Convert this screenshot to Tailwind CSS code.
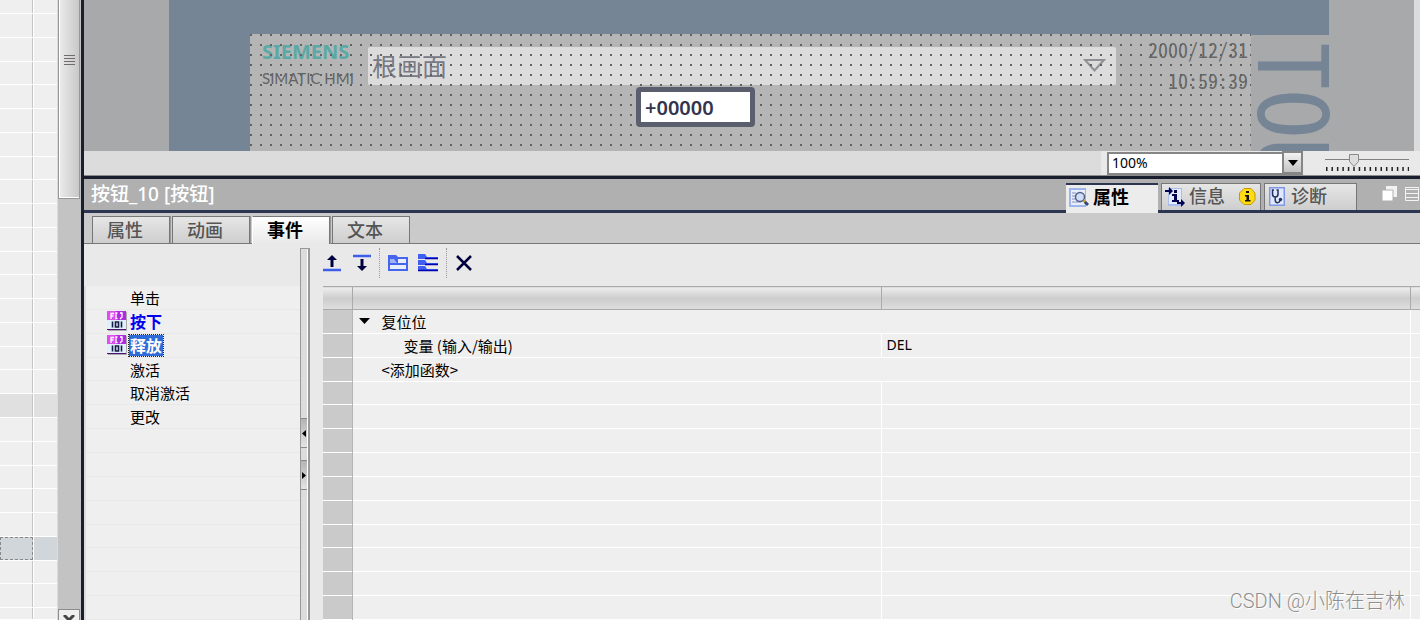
<!DOCTYPE html>
<html lang="zh-CN">
<head>
    <meta charset="UTF-8">
    <meta name="viewport" content="width=device-width, initial-scale=1.0">
    <title>按钮_10 [按钮]</title>
    <script src="https://cdn.jsdelivr.net/npm/@tailwindcss/browser@4"></script>
</head>
<body class="h-screen overflow-hidden bg-[#e9e9e9] font-['Noto_Sans','Noto_Sans_CJK_SC',sans-serif] text-[15px] text-black">
    <div class="flex h-full">

        <!-- Tail of the project tree -->
        <aside class="flex w-[81px] shrink-0 bg-[#efefef]">
            <div id="treeRows" class="flex w-[57px] flex-col"></div>
            <div class="flex w-6 flex-col border-l border-[#dcdcdc] bg-[#c3c3c3] pr-px">
                <div class="flex h-[199px] justify-center border border-t-0 border-[#969696] bg-linear-to-r from-[#ececec] to-[#c8c8c8] pt-[55px] shadow-[inset_1px_-1px_0_#fff]">
                    <svg class="h-[10px] w-[11px]" viewBox="0 0 11 10" stroke="#6f6a6c"><path d="M0 .5h11M0 3.5h11M0 6.5h11M0 9.5h11"/></svg>
                </div>
                <button aria-label="向下滚动" class="mt-auto flex h-[11px] items-end justify-center border border-b-0 border-[#8b8b8b] bg-[#efefef]">
                    <svg class="h-[5px] w-[12px]" viewBox="0 0 12 5" fill="none" stroke="#444" stroke-width="3"><path d="M1 0l5 5 5-5"/></svg>
                </button>
            </div>
        </aside>

        <main class="flex min-w-0 flex-1 flex-col border-l-[3px] border-[#1a1f30]">

            <!-- HMI screen editor -->
            <section class="flex h-[151px] shrink-0 overflow-hidden border-r-[6px] border-r-[#dcdcdc] bg-[#a8a9ab] pr-[85px] pl-[85px]">
                <div class="flex min-w-0 flex-1 bg-[#758595] pl-[81px]">
                    <div class="relative mt-[34px] min-w-0 flex-1 overflow-hidden bg-[#b5b5b5]">
                        <div class="flex items-start pt-1 pl-3">
                            <div class="w-[106px]">
                                <div class="text-[20px] leading-[27px] font-bold text-[#59a9a6]">SIEMENS</div>
                                <div class="font-['Lato',sans-serif] text-[15px] leading-[26px] whitespace-nowrap text-[#636363]">SIMATIC HMI</div>
                            </div>
                            <button class="mt-[9px] flex h-[38px] flex-1 items-center justify-between rounded-xs bg-[#dcdcdc] pr-[10px] pb-[2px] pl-1 font-['Noto_Sans_CJK_SC',sans-serif] text-[25px] leading-9 text-[#777985]">
                                根画面
                                <svg class="h-[13px] w-[23px]" viewBox="0 0 23 13" fill="none" stroke="#8e9096" stroke-width="2"><path d="M2 1h19l-9.500 10.500z"/></svg>
                            </button>
                            <div class="w-[135px] pr-[3px] text-right font-['Noto_Sans_Mono_CJK_SC','DejaVu_Sans_Mono',monospace] text-[20px] leading-[31px] text-[#666]">
                                <div class="-mt-1">2000/12/31</div>
                                <div>10:59:39</div>
                            </div>
                        </div>
                        <!-- Snap grid -->
                        <svg class="pointer-events-none absolute inset-0 h-full w-full">
                            <pattern id="snap" width="10" height="10" patternUnits="userSpaceOnUse">
                                <rect width="2" height="2" fill="#626262"/>
                            </pattern>
                            <rect width="100%" height="100%" fill="url(#snap)"/>
                        </svg>
                        <input aria-label="IO 域" value="+00000" class="absolute top-[53px] left-[386px] h-10 w-[119px] rounded-sm border-[5px] border-[#5b5e6d] bg-white pl-1 text-[20px] font-semibold text-[#33344d]">
                    </div>
                    <div class="mt-[35px] w-[78px] bg-[#a8a9ab] pt-[7px]">
                        <div class="font-['Noto_Sans_Mono_CJK_SC','DejaVu_Sans_Mono',monospace] text-[96px] leading-[96px] whitespace-nowrap text-[#758595] [writing-mode:vertical-rl]">TOU</div>
                    </div>
                </div>
            </section>

            <!-- Zoom bar -->
            <div class="flex h-[25px] shrink-0 items-center justify-end border-b border-[#8b8b8b] bg-[#dcdcdc]">
                <div class="flex h-full w-[319px] items-center bg-[#e9e9e9] pl-[6px]">
                    <div class="relative">
                        <select aria-label="缩放" class="h-[23px] w-[196px] appearance-none border-2 border-[#868686] bg-white pl-[3px] text-[14px] leading-none">
                            <option>100%</option>
                        </select>
                        <span class="pointer-events-none absolute top-0 right-0 flex h-[23px] w-[21px] items-center justify-center border-2 border-[#868686] bg-linear-to-b from-[#f2f2f2] to-[#c4c4c4]">
                            <svg class="h-[6px] w-[10px]" viewBox="0 0 10 6"><path d="M0 0h10l-5 6z"/></svg>
                        </span>
                    </div>
                    <svg class="ml-[22px] h-5 w-[84px]" viewBox="0 0 84 20">
                        <path d="M0 6.500h84" stroke="#808080"/>
                        <path d="M1 16h83" stroke="#222" stroke-width="4" stroke-dasharray="1.500 3.950"/>
                        <path d="M24.500 1.500h9v7l-4.500 5-4.500-5z" fill="#ddd" stroke="#8a8a8a"/>
                    </svg>
                </div>
            </div>

            <!-- Inspector title and tabs -->
            <header class="flex h-[37px] shrink-0 items-end border-t-[3px] border-b-[3px] border-t-[#1a1f30] border-b-[#2c3650] bg-[#b0b0b0]">
                <h1 class="flex-1 self-center pb-[2px] pl-[7px] text-[19px] leading-[26px] font-medium text-white">按钮_10 [按钮]</h1>
                <nav class="mr-[25px] flex items-end gap-[3px] text-[18px] font-medium text-[#555]">
                    <button class="-mb-[3px] flex h-[30px] w-[92px] items-center border-t-2 border-t-[#2c3650] bg-[#ececec] pb-[3px] pl-[3px] font-bold text-black">
                        <svg class="mr-1 h-5 w-5" viewBox="0 0 20 20">
                            <path d="M0 0h17v19H0z" fill="#9db4ec"/><path d="M2 2h14v15H2z" fill="#e8eefc"/>
                            <path d="M3 5h4M3 8h3M3 11h4M3 14h9" stroke="#8492bb"/>
                            <circle cx="11" cy="9" r="4.500" fill="#cfe0f6" stroke="#53608a" stroke-width="1.500"/>
                            <path d="M14.500 12.500l2 2" stroke="#c79b31" stroke-width="2.500"/><path d="M16 14l3 3" stroke="#31477f" stroke-width="3"/>
                        </svg>属性
                    </button>
                    <button class="flex h-[27px] w-[100px] items-center border border-b-0 border-[#777] bg-linear-to-b from-[#e6e6e6] to-[#cecece] pb-px pl-[3px]">
                        <svg class="mr-1 h-5 w-5" viewBox="0 0 20 20">
                            <path d="M3 1h14v18H3z" fill="#a9bdef"/><path d="M4 2h12v15H4z" fill="#e2eafc"/>
                            <path d="M0 4h6M12 16h7" stroke="#000050" stroke-width="2"/>
                            <path d="M4 0l4 4-4 4zM16 12l4 4-4 4z" fill="#000050"/>
                            <path d="M9 3h3v3H9zM7 7h5v6h2v2H7v-2h2V9H7z" fill="#000050"/>
                        </svg>信息
                        <svg class="ml-[14px] h-[17px] w-[17px]" viewBox="0 0 17 17">
                            <path d="M5 .5h7l4 4.500v7l-4 4.500H5L.5 12V5z" fill="#ffdb12" stroke="#c29a06"/>
                            <path d="M7 3h3v2H7zM6 7h4v5h1.500v1.500H6V12h1.500V8.500H6z" fill="#111"/>
                        </svg>
                    </button>
                    <button class="flex h-[27px] w-[93px] items-center border border-b-0 border-[#777] bg-linear-to-b from-[#e6e6e6] to-[#cecece] pb-px pl-1">
                        <svg class="mr-[6px] h-5 w-4" viewBox="0 0 16 20">
                            <path d="M0 0h16v19H0z" fill="#7f98e6"/><path d="M1.500 1.500h13v16h-13z" fill="#dfe8fc"/>
                            <path d="M5 3H3.500v4c0 4 5.500 4 5.500 0V3H7.500M6.200 10v3c0 3.500 4.500 3.500 4.800 0" fill="none" stroke="#26305c" stroke-width="1.500"/>
                            <circle cx="11.500" cy="12.500" r="1.700" fill="#26305c"/>
                        </svg>诊断
                    </button>
                </nav>
                <div class="flex gap-2 self-center pr-px pb-[2px]">
                    <button aria-label="浮动">
                        <svg class="block h-[15px] w-[15px]" viewBox="0 0 15 15"><path d="M4 0h11v11H4z" fill="#f2f2f2"/><path d="M0 4h11v11H0z" fill="#fff" stroke="#b0b0b0"/></svg>
                    </button>
                    <button aria-label="折叠">
                        <svg class="block h-[14px] w-[14px]" viewBox="0 0 14 14" fill="none" stroke="#f4f4f4"><path d="M.5.500h13v13H.5zM0 2.500h14M0 6.500h14M0 10.500h14"/></svg>
                    </button>
                </div>
            </header>

            <nav class="flex h-[31px] shrink-0 items-end gap-[2px] border-b border-[#777] bg-[#cacaca] pl-2 text-[18px] font-medium text-[#555]">
                <button class="h-[27px] w-[78px] border border-b-0 border-[#777] bg-linear-to-b from-[#e6e6e6] to-[#cecece] pr-3 shadow-[1px_0_0_#999]">属性</button>
                <button class="h-[27px] w-[78px] border border-b-0 border-[#777] bg-linear-to-b from-[#e6e6e6] to-[#cecece] pr-3 shadow-[1px_0_0_#999]">动画</button>
                <button class="-mb-px h-7 w-[78px] border border-b-0 border-[#777] border-l-white bg-linear-to-b from-white to-[#e9e9e9] pr-3 font-bold text-black shadow-[1px_0_0_#999]">事件</button>
                <button class="h-[27px] w-[78px] border border-b-0 border-[#777] bg-linear-to-b from-[#e6e6e6] to-[#cecece] pr-3">文本</button>
            </nav>

            <div class="flex min-h-0 flex-1">
                <!-- Event list -->
                <ul id="eventList" class="mt-[42px] flex w-[216px] flex-col border-l-2 border-[#dcdcdc] bg-[#efefef] font-['Noto_Sans_CJK_SC',sans-serif]"></ul>

                <!-- Splitter -->
                <div class="mt-1 flex w-[10px] flex-col border-t border-r-2 border-l border-[#999] bg-[#dcdcdc] pt-[169px] shadow-[inset_-1px_0_0_#fff]">
                    <button aria-label="折叠列表" class="flex h-[30px] w-[6px] items-center border-y border-[#888] bg-linear-to-b from-[#b4b4b4] to-[#e4e4e4]">
                        <svg class="h-[7px] w-[5px]" viewBox="0 0 5 7"><path d="M5 0v7L1 3.500z"/></svg>
                    </button>
                    <button aria-label="展开列表" class="mt-3 flex h-[30px] w-[6px] items-center border-y border-[#888] bg-linear-to-b from-[#b4b4b4] to-[#e4e4e4]">
                        <svg class="h-[7px] w-[5px]" viewBox="0 0 5 7"><path d="M1 0v7l4-3.500z"/></svg>
                    </button>
                </div>

                <section class="flex min-w-0 flex-1 flex-col pl-[13px]">
                    <!-- Toolbar -->
                    <div class="flex h-[42px] shrink-0 items-start pt-1">
                        <div class="flex h-[30px] items-center gap-3 border-r border-dotted border-[#999] pr-2">
                            <button aria-label="上移">
                                <svg class="block h-[18px] w-[18px]" viewBox="0 0 18 18"><path d="M0 16h18" stroke="#3c5ee8" stroke-width="2.500"/><path d="M9 1l5 5H4z" fill="#000040"/><path d="M9 4v9" stroke="#000040" stroke-width="3"/></svg>
                            </button>
                            <button aria-label="下移">
                                <svg class="block h-[18px] w-[18px]" viewBox="0 0 18 18"><path d="M0 2h18" stroke="#3c5ee8" stroke-width="2.500"/><path d="M9 17l5-5H4z" fill="#000040"/><path d="M9 5v9" stroke="#000040" stroke-width="3"/></svg>
                            </button>
                        </div>
                        <div class="flex h-[30px] items-center gap-[10px] border-r border-dotted border-[#999] px-2">
                            <button aria-label="展开全部">
                                <svg class="block h-[18px] w-5" viewBox="0 0 20 18"><path d="M0 1h8l2 2h10v14H0z" fill="#4664ee"/><path d="M10 5h8v4h-8zM2 11h16v4H2z" fill="#e7edff"/><path d="M2 5h4l3 4H2z" fill="#9fb2fa"/></svg>
                            </button>
                            <button aria-label="折叠全部">
                                <svg class="block h-[18px] w-5" viewBox="0 0 20 18"><path d="M0 0h7l2 3h11v2H0zM0 6h7l2 3h11v2H0zM0 12h7l2 3h11v2H0z" fill="#3f5ff0"/><path d="M7 4.500h13M7 10.500h13M0 16.500h20" stroke="#0000b4" stroke-width="1.500"/></svg>
                            </button>
                        </div>
                        <button aria-label="删除" class="flex h-[30px] items-center pl-[9px]">
                            <svg class="block h-4 w-4" viewBox="0 0 16 16" stroke="#000040" stroke-width="2.500"><path d="M1 1l14 14M15 1L1 15"/></svg>
                        </button>
                    </div>

                    <!-- Function table -->
                    <div class="min-h-0 flex-1">
                        <table class="h-full w-full table-fixed border-collapse bg-[#efefef] text-left font-['Noto_Sans_CJK_SC',sans-serif]">
                            <colgroup><col class="w-[29px]"><col><col><col class="w-[10px]"></colgroup>
                            <thead>
                                <tr class="h-[23px] border-y border-[#aaa] bg-linear-to-b from-[#ececec] via-[#cdcdcd] to-[#dedede]">
                                    <th class="border-r border-[#aaa]"></th>
                                    <th class="border-r border-[#aaa]"></th>
                                    <th class="border-r border-[#aaa]"></th>
                                    <th></th>
                                </tr>
                            </thead>
                            <tbody id="functionRows">
                                <tr class="h-[23px] border-b border-white">
                                    <td class="border-r border-[#b5b5b5] bg-[#cacaca]"></td>
                                    <td colspan="2" class="border-r border-white p-0 leading-none">
                                        <div class="flex items-center pl-[6px]">
                                            <svg class="mr-3 h-[6px] w-[11px]" viewBox="0 0 11 6"><path d="M0 0h11L5.500 6z"/></svg>复位位
                                        </div>
                                    </td>
                                    <td></td>
                                </tr>
                                <tr class="h-[23px] border-b border-white">
                                    <td class="border-r border-[#b5b5b5] bg-[#cacaca]"></td>
                                    <td class="border-r border-white p-0 pl-[51px] leading-none">变量 (输入/输出)</td>
                                    <td class="border-r border-white p-0 pl-[5px] font-['Noto_Sans',sans-serif] text-[14px] leading-none">DEL</td>
                                    <td></td>
                                </tr>
                                <tr class="h-[23px] border-b border-white">
                                    <td class="border-r border-[#b5b5b5] bg-[#cacaca]"></td>
                                    <td colspan="2" class="border-r border-white p-0 pl-[29px] leading-none">&lt;添加函数&gt;</td>
                                    <td></td>
                                </tr>
                            </tbody>
                        </table>
                    </div>
                </section>
            </div>
        </main>
    </div>

    <div class="absolute right-[15px] bottom-[5px] font-['Roboto','Noto_Sans_CJK_SC',sans-serif] text-[20px] leading-7 font-light text-[#8f8f8f] [text-shadow:1px_1px_0_#fff]">CSDN @小陈在吉林</div>

    <script>
        const treeRows = document.getElementById('treeRows');
        const eventList = document.getElementById('eventList');
        const functionRows = document.getElementById('functionRows');

        // Tree rows: the first and the last are cut off by the window
        const rowColors = { 17: 'bg-[#e0e0e0]', 23: 'bg-[#d0d6da]' };
        for (let i = 0; i < 27; i++) {
            const size = i === 0 ? 'h-[14px]' : i === 26 ? 'h-[12px]' : 'flex-1';
            const focus = i === 23 ? 'outline-1 -outline-offset-1 outline-dashed outline-[#888]' : '';
            treeRows.innerHTML += `
                <div class="flex ${size} border-b border-white ${rowColors[i] || ''}">
                    <div class="w-[33px] border-r border-[#c4c4c4] ${focus}"></div>
                    <div class="flex-1 border-l border-white"></div>
                </div>`;
        }

        const scriptIcon = `
            <svg class="h-5 w-5" viewBox="0 0 20 20">
                <path d="M1 1h19v19H1z" fill="#aaa"/>
                <path d="M0 0h19v10H0z" fill="#b32be0"/><path d="M0 0h9v10H0z" fill="#dc50f0"/>
                <path d="M0 9h19v9H0z" fill="#dff0fa"/><path d="M0 18h19v1H0z" fill="#50107a"/>
                <path d="M4 8V2.500h3M4 5h2.500M10.500 2H9v5.500h1.500M13 2h2v4l-2 2" fill="none" stroke="#fff" stroke-width="1.300"/>
                <path d="M5.500 10.500v6M8.500 11h3v5h-3zM14.500 10.500v6" fill="none" stroke="#1a1a48" stroke-width="1.600"/>
            </svg>`;

        const events = [
            { name: '单击' },
            { name: '按下', used: true },
            { name: '释放', used: true, selected: true },
            { name: '激活' },
            { name: '取消激活' },
            { name: '更改' },
        ];

        for (let i = 0; i < 14; i++) {
            const event = events[i];
            let style = '';
            if (event && event.used) style = 'font-bold text-[16px] text-[#0000f0]';
            if (event && event.selected) style = 'font-bold text-[16px] text-white bg-[#2f6bd8] outline-1 outline-dotted outline-[#222]';
            eventList.innerHTML += `
                <li class="flex min-h-0 flex-1 items-center border-b border-[#e8e8e8] pl-[21px]">
                    <span class="w-[22px]">${event && event.used ? scriptIcon : ''}</span>
                    ${event ? `<button class="h-[21px] px-px leading-[21px] ${style}">${event.name}</button>` : ''}
                </li>`;
        }

        for (let i = 0; i < 10; i++) {
            functionRows.innerHTML += `
                <tr class="h-[23px] border-b border-white">
                    <td class="border-r border-[#b5b5b5] bg-[#cacaca]"></td>
                    <td class="border-r border-white"></td>
                    <td class="border-r border-white"></td>
                    <td></td>
                </tr>`;
        }
    </script>
</body>
</html>
